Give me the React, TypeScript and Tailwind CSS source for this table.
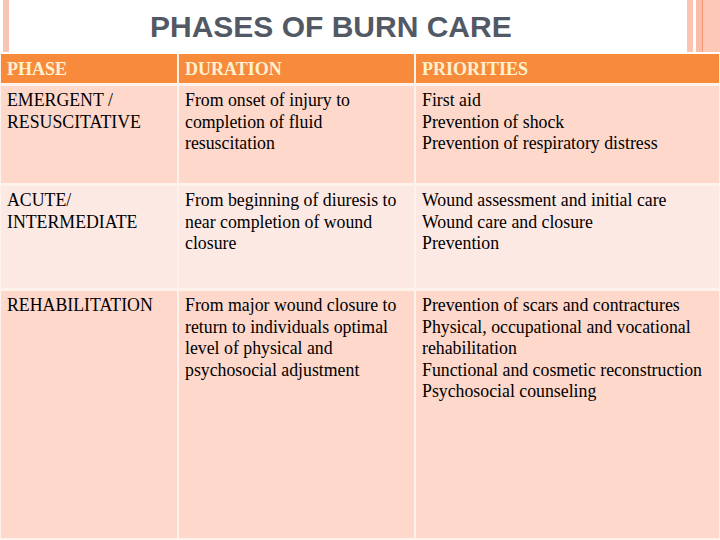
import React from 'react';

const rows = [
  {
    phase: ['EMERGENT /', 'RESUSCITATIVE'],
    duration: 'From onset of injury to completion of fluid resuscitation',
    priorities: ['First aid', 'Prevention of shock', 'Prevention of respiratory distress'],
    light: false,
    h: 'h-[97px]',
  },
  {
    phase: ['ACUTE/', 'INTERMEDIATE'],
    duration: 'From beginning of diuresis to near completion of wound closure',
    priorities: ['Wound assessment and initial care', 'Wound care and closure', 'Prevention'],
    light: true,
    h: 'h-[102px]',
  },
  {
    phase: ['REHABILITATION'],
    duration: 'From major wound closure to return to individuals optimal level of physical and psychosocial adjustment',
    priorities: [
      'Prevention of scars and contractures',
      'Physical, occupational and vocational rehabilitation',
      'Functional and cosmetic reconstruction',
      'Psychosocial counseling',
    ],
    light: false,
    h: 'flex-1',
  },
];

export default function App() {
  return (
    <div className="w-[720px] h-[540px] bg-white flex flex-col overflow-hidden">
      {/* title bar */}
      <div className="h-[54px] flex shrink-0">
        <div className="w-[6px] ml-[3px] h-[52px] bg-[#f9c6b5]" />
        <h1 className="ml-[141px] mt-[9px] text-[30px] leading-[36px] font-bold text-[#525964] font-['Liberation_Sans',Arial,sans-serif]">
          PHASES OF BURN CARE
        </h1>
        <div className="ml-auto flex h-[52px]">
          <div className="w-[6px] bg-[#fbc3b0]" />
          <div className="w-[3px] bg-white" />
          <div className="w-[6px] bg-[#fbbda7]" />
          <div className="w-[1px] bg-[#f09a76]" />
          <div className="w-[17px] bg-[#fcc9b7]" />
        </div>
      </div>

      {/* table */}
      <div className="flex-1 flex flex-col gap-[3px] bg-[#fdf3ec] px-[1px] pb-[2px] font-['Liberation_Serif','Times_New_Roman',serif] text-[17.8px] leading-[21.5px] text-black">
        <div className="h-[29px] grid grid-cols-[176px_235px_1fr] gap-[2px] bg-[#fdf3ec]">
          {['PHASE', 'DURATION', 'PRIORITIES'].map((t) => (
            <div key={t} className="bg-[#f88b3b] px-[6px] pt-[2px] flex items-center text-[18px] font-bold text-[#fdf1d2]">
              {t}
            </div>
          ))}
        </div>
        {rows.map((r, i) => (
          <div key={i} className={`${r.h} grid grid-cols-[176px_235px_1fr] gap-[2px]`}>
            <div className={`${r.light ? 'bg-[#fde9e3]' : 'bg-[#fdd8cb]'} px-[6px] pt-[4px]`}>
              {r.phase.map((p) => (
                <div key={p}>{p}</div>
              ))}
            </div>
            <div className={`${r.light ? 'bg-[#fde9e3]' : 'bg-[#fdd8cb]'} px-[6px] pt-[4px]`}>{r.duration}</div>
            <div className={`${r.light ? 'bg-[#fde9e3]' : 'bg-[#fdd8cb]'} px-[6px] pt-[4px]`}>
              {r.priorities.map((p) => (
                <div key={p}>{p}</div>
              ))}
            </div>
          </div>
        ))}
      </div>
    </div>
  );
}
